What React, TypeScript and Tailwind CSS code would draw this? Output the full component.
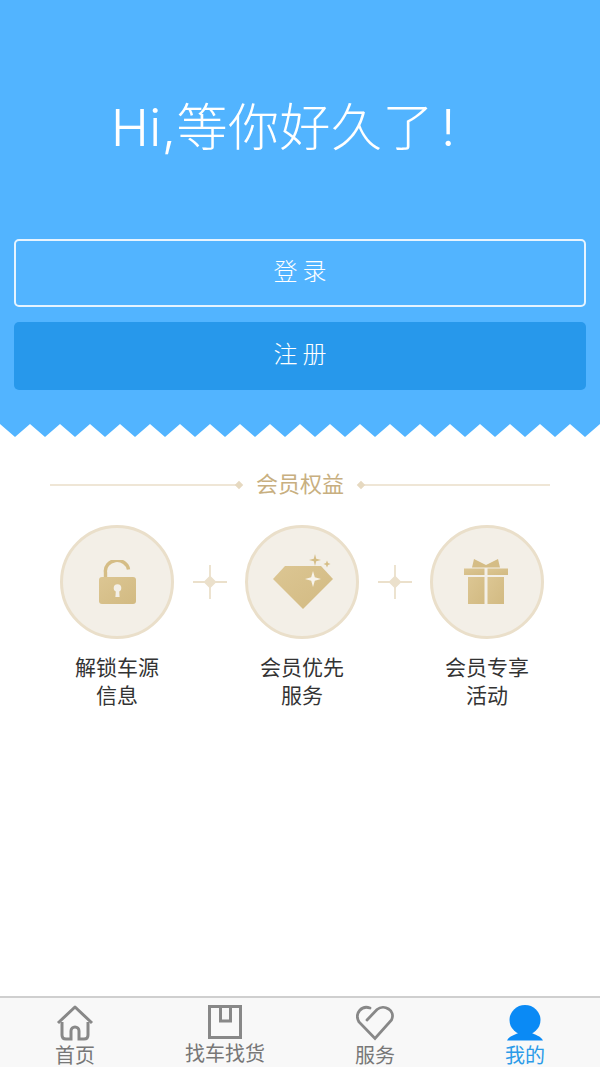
const sans = "font-['Inter','Noto_Sans_CJK_SC',sans-serif]";

const Sparkle = () => (
  <svg width="36" height="36" viewBox="0 0 36 36" className="shrink-0">
    <path d="M1 18H35M18 1V35" stroke="#ebe0cb" strokeWidth="1.8" />
    <path d="M18 11.5L24.5 18L18 24.5L11.5 18Z" fill="#ebe0cb" />
  </svg>
);

const Gold = ({ id }: { id: string }) => (
  <defs>
    <linearGradient id={id} x1="0" y1="0" x2="1" y2="1">
      <stop offset="0" stopColor="#dcc693" />
      <stop offset="1" stopColor="#d2ba82" />
    </linearGradient>
  </defs>
);

const LockIcon = () => (
  <svg width="38" height="45" viewBox="0 0 38 45">
    <Gold id="lock" />
    <path d="M7.5 18V12.5A11.5 10.5 0 0 1 30.5 9.5" fill="none" stroke="#d5bd86" strokeWidth="3.4" />
    <rect x="1" y="17" width="37" height="27" rx="3" fill="url(#lock)" />
    <circle cx="19.5" cy="28" r="3.8" fill="#f3efe7" />
    <path d="M18 29H21L21.6 37H17.4Z" fill="#f3efe7" />
  </svg>
);

const DiamondIcon = () => (
  <svg width="62" height="56" viewBox="-1 0 62 56">
    <Gold id="gem" />
    <path d="M13 12H49L61 25L31 55L1 25Z" fill="url(#gem)" />
    <path d="M41 17L42.8 23.2L49 25L42.8 26.8L41 33L39.2 26.8L33 25L39.2 23.2Z" fill="#f7f3ea" />
    <path d="M43 0L44.2 4.8L49 6L44.2 7.2L43 12L41.8 7.2L37 6L41.8 4.8Z" fill="#d5bd86" />
    <path d="M55 6.5L56 9L58.5 10L56 11L55 13.5L54 11L51.5 10L54 9Z" fill="#d5bd86" />
  </svg>
);

const GiftIcon = () => (
  <svg width="46" height="46" viewBox="1 0 46 46">
    <Gold id="gift" />
    <path d="M11 0L23 6L35 0L37 8.5H9Z" fill="#d5bd86" />
    <rect x="1" y="9.5" width="20.5" height="6.5" fill="url(#gift)" />
    <rect x="24.5" y="9.5" width="20.5" height="6.5" fill="url(#gift)" />
    <rect x="5" y="18" width="16.5" height="27" fill="url(#gift)" />
    <rect x="24.5" y="18" width="16.5" height="27" fill="url(#gift)" />
  </svg>
);

const benefits = [
  { icon: <LockIcon />, lines: ["解锁车源", "信息"] },
  { icon: <DiamondIcon />, lines: ["会员优先", "服务"] },
  { icon: <GiftIcon />, lines: ["会员专享", "活动"] },
];

const HomeIcon = () => (
  <svg width="38" height="36" viewBox="0 0 38 36" fill="none" stroke="#888" strokeWidth="3">
    <path d="M2 18L19 2L36 18" strokeLinejoin="round" />
    <path d="M6 17V30Q6 34 10 34H15V26A4 4 0 0 1 23 26V34H28Q32 34 32 30V17" />
  </svg>
);

const BoxIcon = () => (
  <svg width="34" height="34" viewBox="0 0 34 34" fill="none" stroke="#888" strokeWidth="3">
    <rect x="1.5" y="1.5" width="31" height="31" />
    <path d="M12.5 2V16H22.5V2" />
  </svg>
);

const HeartIcon = () => (
  <svg width="38" height="36" viewBox="0 0 38 36" fill="none" stroke="#888" strokeWidth="2.8" strokeLinecap="round">
    <path d="M11 15L21 4.5C28 -1 40 5 35.5 15L19 33.5L3 17C-2 8 6 0 14 3" />
  </svg>
);

const PersonIcon = () => (
  <svg width="36" height="36" viewBox="0 0 36 36" fill="#0a8af5">
    <ellipse cx="18" cy="15" rx="15.5" ry="15" />
    <path d="M0 35.5C2 31 8 30 13 27H23C28 30 34 31 36 35.5Z" />
  </svg>
);

const tabs = [
  { label: "首页", icon: <HomeIcon />, active: false },
  { label: "找车找货", icon: <BoxIcon />, active: false },
  { label: "服务", icon: <HeartIcon />, active: false },
  { label: "我的", icon: <PersonIcon />, active: true },
];

export default function App() {
  return (
    <div className={`flex h-[1067px] w-[600px] flex-col overflow-hidden bg-white ${sans}`}>
      <div className="h-[424px] shrink-0 bg-[#52b4ff] px-[14px]">
        <h1 className="mt-[94px] h-[67px] pl-[97px] text-[51px] leading-[67px] font-light tracking-[0.5px] whitespace-nowrap text-white">
          Hi,等你好久了<span className="ml-[7px]">!</span>
        </h1>
        <button className="mt-[78px] block h-[68px] w-full rounded-[5px] border-2 border-[#e6f4ff] pb-[2px] pl-[5px] text-[24px] font-light tracking-[5px] text-white">
          登录
        </button>
        <button className="mt-[15px] block h-[68px] w-full rounded-[5px] bg-[#2798eb] pb-[3px] pl-[5px] text-[24px] font-light tracking-[5px] text-white">
          注册
        </button>
      </div>

      <svg width="600" height="13" viewBox="0 0 600 13" className="block shrink-0">
        <path
          d="M0 0V0L15 13L30 0L45 13L60 0L75 13L90 0L105 13L120 0L135 13L150 0L165 13L180 0L195 13L210 0L225 13L240 0L255 13L270 0L285 13L300 0L315 13L330 0L345 13L360 0L375 13L390 0L405 13L420 0L435 13L450 0L465 13L480 0L495 13L510 0L525 13L540 0L555 13L570 0L585 13L600 0Z"
          fill="#52b4ff"
        />
      </svg>

      <div className="mt-[32px] flex items-center justify-center px-[50px]">
        <div className="mt-[2px] h-[2px] flex-1 bg-[#efe6d6]" />
        <div className="mt-[2px] h-[6px] w-[6px] rotate-45 bg-[#e6d9c0]" />
        <span className="mx-[14px] text-[22px] leading-[30px] text-[#c8af80]">会员权益</span>
        <div className="mt-[2px] h-[6px] w-[6px] rotate-45 bg-[#e6d9c0]" />
        <div className="mt-[2px] h-[2px] flex-1 bg-[#efe6d6]" />
      </div>

      <div className="mt-[26px] flex items-start justify-center pl-[4px]">
        {benefits.map((b, i) => (
          <div key={b.lines[0]} className="flex items-start">
            {i > 0 && (
              <div className="flex h-[114px] w-[71px] items-center justify-center">
                <Sparkle />
              </div>
            )}
            <div className="flex w-[114px] flex-col items-center">
              <div className="flex h-[114px] w-[114px] items-center justify-center rounded-full border-[3px] border-[#eadfca] bg-[#f3efe7]">
                {b.icon}
              </div>
              <div className="mt-[15px] text-center text-[21px] leading-[28px] whitespace-nowrap text-[#333]">
                {b.lines.map((l) => (
                  <div key={l}>{l}</div>
                ))}
              </div>
            </div>
          </div>
        ))}
      </div>

      <div className="mt-auto flex h-[71px] shrink-0 border-t-2 border-[#cfcfcf] bg-[#f8f8f8]">
        {tabs.map((t) => (
          <div key={t.label} className="flex flex-1 flex-col items-center">
            <div className="mt-[7px] flex h-[36px] items-center justify-center">{t.icon}</div>
            <span
              className={`mt-[2px] text-[20px] leading-[26px] ${t.active ? "text-[#2b9be8]" : "text-[#777]"}`}
            >
              {t.label}
            </span>
          </div>
        ))}
      </div>
    </div>
  );
}
